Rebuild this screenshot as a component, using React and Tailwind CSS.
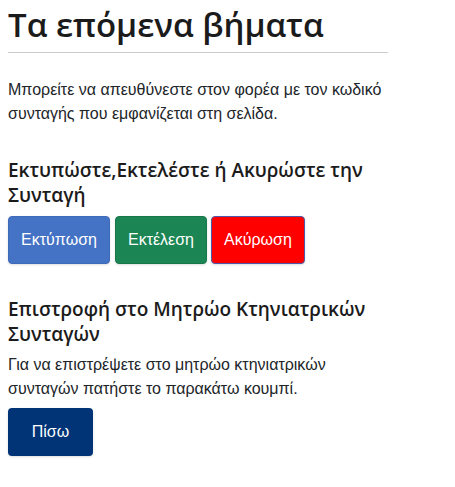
export default function App() {
  const body = { fontFamily: '"Liberation Sans", Arial, sans-serif' };
  const head = { fontFamily: '"Open Sans", "Noto Sans", sans-serif' };

  return (
    <div className="min-h-screen bg-white px-2 text-[#212529]" style={body}>
      {/* Τίτλος */}
      <div className="w-[380px] border-b border-[#cccccc] pb-[2px]">
        <h1 className="text-[33px] font-semibold leading-[50px] text-[#1b1b1b]" style={head}>
          Τα επόμενα βήματα
        </h1>
      </div>

      <p className="mt-[25px] w-[390px] text-base leading-6">
        Μπορείτε να απευθύνεστε στον φορέα με τον κωδικό συνταγής που εμφανίζεται στη σελίδα.
      </p>

      {/* Ενέργειες συνταγής */}
      <h3 className="mt-[32px] w-[380px] text-[19px] font-semibold leading-[25px] text-[#1b1b1b]" style={head}>
        Εκτυπώστε,Εκτελέστε ή Ακυρώστε την Συνταγή
      </h3>
      <div className="mt-[8px] flex gap-[4px]">
        <button className="h-[48px] w-[102px] rounded border border-[#3e6ab8] bg-[#4472c4] text-base text-white shadow-sm">
          Εκτύπωση
        </button>
        <button className="ml-[1px] h-[48px] w-[92px] rounded border border-[#17774a] bg-[#1b8554] text-base text-white shadow-sm">
          Εκτέλεση
        </button>
        <button className="h-[48px] w-[94px] rounded border border-[#4a5aa8] bg-[#ff0000] text-base text-white shadow-sm">
          Ακύρωση
        </button>
      </div>

      {/* Επιστροφή */}
      <h3 className="mt-[33px] w-[380px] text-[19px] font-semibold leading-[25px] text-[#1b1b1b]" style={head}>
        Επιστροφή στο Μητρώο Κτηνιατρικών Συνταγών
      </h3>
      <p className="mt-[6px] w-[340px] text-base leading-6">
        Για να επιστρέψετε στο μητρώο κτηνιατρικών συνταγών πατήστε το παρακάτω κουμπί.
      </p>
      <button className="mt-[7px] h-[48px] w-[85px] rounded bg-[#003476] text-base text-white shadow-sm">
        Πίσω
      </button>
    </div>
  );
}
